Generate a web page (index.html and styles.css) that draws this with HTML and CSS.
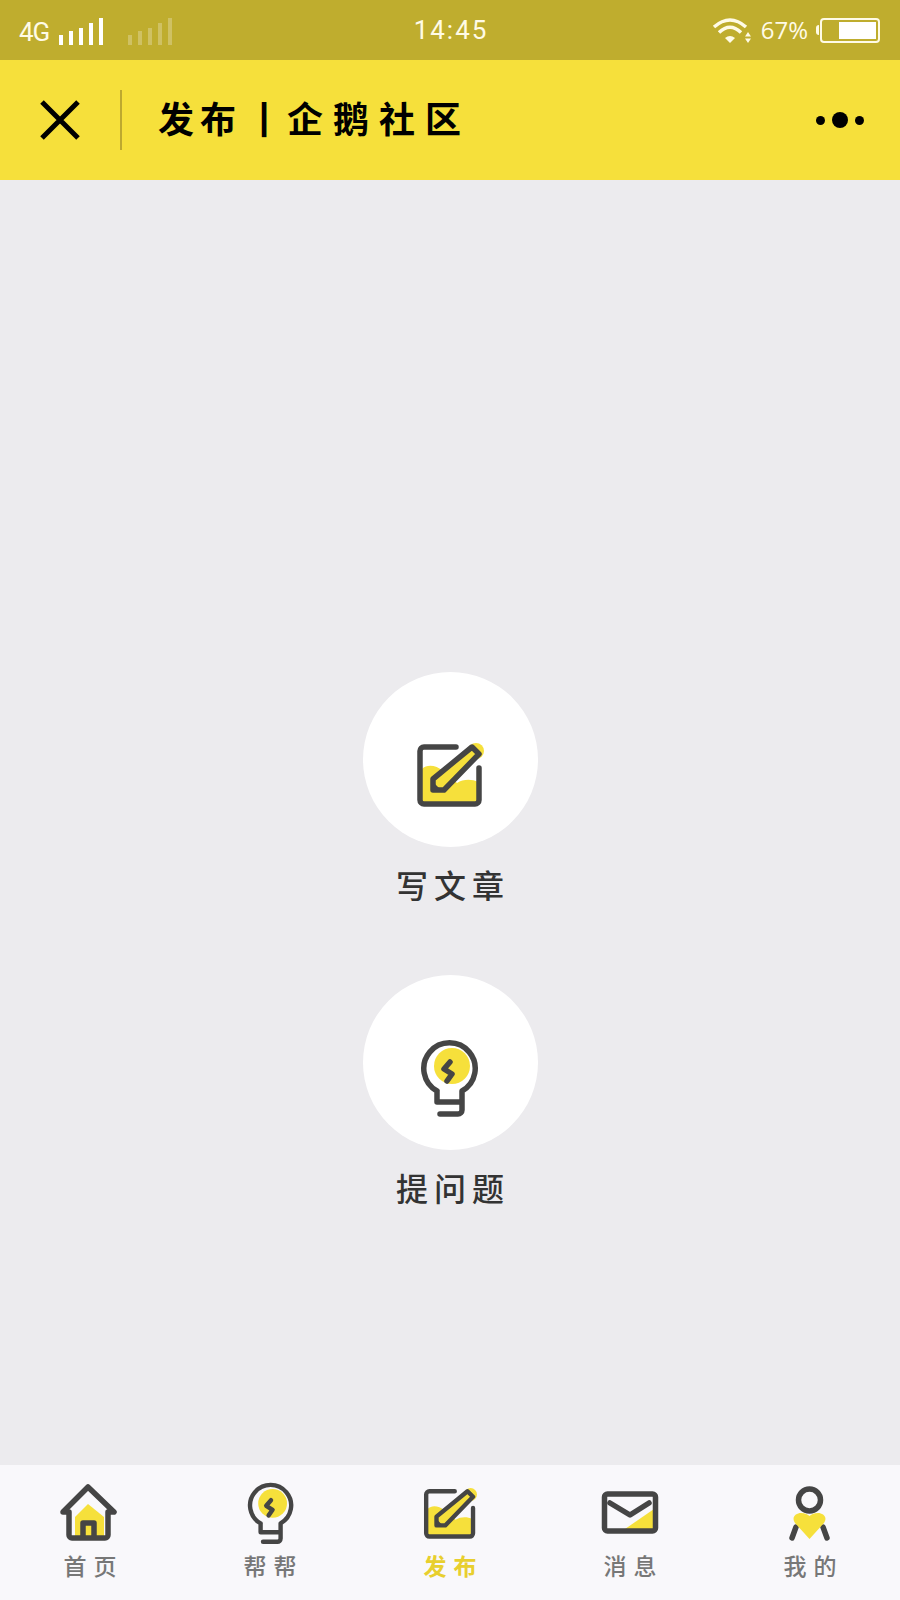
FILE: index.html
```html
<!DOCTYPE html>
<html lang="zh-CN">
<head>
  <meta charset="UTF-8">
  <title>发布 | 企鹅社区</title>
  <link rel="stylesheet" href="styles.css">
</head>
<body>
  <svg class="defs" width="0" height="0">
    <symbol id="icon-edit" viewBox="0 0 68 64">
      <path class="fill-y" d="M6 59V26C11 21 20 22 27 28L41 40C47 36 56 36 62 39V59Z"/>
      <circle class="fill-y" cx="60" cy="8" r="8"/>
      <path class="line" d="M40 4H8a4 4 0 0 0-4 4V57a4 4 0 0 0 4 4H59a4 4 0 0 0 4-4V25"/>
      <path class="pencil" d="M56 4L63 11L28 47H17V36Z"/>
      <path class="fill-d" d="M17 39L25 47H17Z"/>
    </symbol>
    <symbol id="icon-bulb" viewBox="0 0 60 80">
      <circle class="fill-y" cx="32" cy="28" r="18"/>
      <path class="line" d="M17 53A25.7 25.7 0 1 1 42 53V72a4 4 0 0 1-4 4H20M17 53V64H42"/>
      <path class="line" d="M30 24L24 31L32 36L27 43"/>
    </symbol>
    <symbol id="icon-home" viewBox="0 0 60 60">
      <path class="fill-y" d="M15 34L28 21L44 34V54H15Z"/>
      <path class="line" d="M9 29H3L28 4L54 29H48M9 29V52a3 3 0 0 0 3 3H45a3 3 0 0 0 3-3V29M23 55V40H34V55"/>
    </symbol>
    <symbol id="icon-mail" viewBox="0 0 60 50">
      <path class="fill-y" d="M54 21L25 41H54Z"/>
      <rect class="line" x="4.5" y="6" width="51" height="37" rx="3"/>
      <path class="line" d="M10 15L30 27L49 15"/>
    </symbol>
    <symbol id="icon-user" viewBox="0 0 50 60">
      <circle class="line" cx="24.500" cy="17" r="11"/>
      <path class="line" d="M11 44L7 55M38 44L42 55"/>
      <path class="fill-y" d="M24.500 56L10 40C6 34 11 30 16 30C20 30 23 31.500 24.500 33C26 31.500 29 30 33 30C38 30 43 34 39 40Z"/>
    </symbol>
  </svg>

  <div class="status-bar">
    <div class="status-left">
      <span class="net">4G</span>
      <span class="signal"><i></i><i></i><i></i><i></i><i></i></span>
      <span class="signal off"><i></i><i></i><i></i><i></i><i></i></span>
    </div>
    <div class="status-time">14:45</div>
    <div class="status-right">
      <svg class="wifi" width="40" height="28" viewBox="0 0 40 28">
        <path class="wifi-arc" d="M2 11Q18 -3 34 11M7 16.500Q18 6 29 16.500"/>
        <path class="wifi-dot" d="M13 22Q18 18 23 22L18 27Z"/>
        <path class="wifi-dot" d="M36 16L39 20.500H33ZM33 22.500H39L36 27Z"/>
      </svg>
      <span class="percent">67%</span>
      <span class="battery-nub"></span>
      <span class="battery"><span class="battery-level"></span></span>
    </div>
  </div>

  <header class="top-bar">
    <button class="close" aria-label="关闭">
      <svg width="40" height="40" viewBox="0 0 40 40"><path class="close-x" d="M2 2L38 38M38 2L2 38"/></svg>
    </button>
    <div class="top-divider"></div>
    <h1 class="top-title"><span>发布</span><span class="sep">|</span><span class="wide">企鹅社区</span></h1>
    <div class="more"><i></i><i class="big"></i><i></i></div>
  </header>

  <main class="content">
    <a class="action">
      <span class="action-circle"><svg class="action-icon" width="68" height="64"><use href="#icon-edit"/></svg></span>
      <span class="action-label">写文章</span>
    </a>
    <a class="action">
      <span class="action-circle"><svg class="action-icon" width="60" height="80"><use href="#icon-bulb"/></svg></span>
      <span class="action-label">提问题</span>
    </a>
  </main>

  <nav class="tab-bar">
    <a class="tab">
      <span class="tab-icon"><svg width="60" height="60"><use href="#icon-home"/></svg></span>
      <span class="tab-label">首页</span>
    </a>
    <a class="tab">
      <span class="tab-icon bulb"><svg width="48" height="64"><use href="#icon-bulb"/></svg></span>
      <span class="tab-label">帮帮</span>
    </a>
    <a class="tab active">
      <span class="tab-icon"><svg width="54" height="51"><use href="#icon-edit"/></svg></span>
      <span class="tab-label">发布</span>
    </a>
    <a class="tab">
      <span class="tab-icon"><svg width="60" height="50"><use href="#icon-mail"/></svg></span>
      <span class="tab-label">消息</span>
    </a>
    <a class="tab">
      <span class="tab-icon"><svg width="50" height="60"><use href="#icon-user"/></svg></span>
      <span class="tab-label">我的</span>
    </a>
  </nav>
</body>
</html>
```

FILE: styles.css
```css
:root {
  --yellow: #f6e03b;
  --olive: #bfad2e;
  --bg: #ecebee;
  --ink: #454545;
  --cream: #fffbe6;
}

* {
  box-sizing: border-box;
}

body {
  margin: 0;
  width: 900px;
  height: 1600px;
  display: flex;
  flex-direction: column;
  background-color: var(--bg);
  font-family: "Noto Sans CJK SC", "Noto Sans", sans-serif;
}

.defs {
  position: absolute;
}

.fill-y {
  fill: var(--yellow);
}

.fill-d {
  fill: var(--ink);
}

.line {
  fill: none;
  stroke: var(--ink);
  stroke-width: 5.5;
  stroke-linecap: round;
  stroke-linejoin: round;
}

.pencil {
  fill: var(--yellow);
  stroke: var(--ink);
  stroke-width: 5.5;
  stroke-linejoin: round;
}

/* status bar */
.status-bar {
  height: 60px;
  flex: none;
  display: flex;
  align-items: center;
  background-color: var(--olive);
  color: var(--cream);
}

.status-left,
.status-right {
  flex: 1;
  display: flex;
}

.status-left {
  align-items: flex-end;
  height: 27px;
  margin-top: 3px;
  padding-left: 19px;
}

.net {
  font-family: "Roboto", sans-serif;
  font-size: 26px;
  line-height: 25px;
  letter-spacing: -1px;
  margin-right: 10px;
}

.signal {
  display: flex;
  align-items: flex-end;
  gap: 6px;
  margin-right: 25px;
}

.signal i {
  display: block;
  width: 4px;
  background-color: #fff;
}

.signal i:nth-child(1) { height: 10px; }
.signal i:nth-child(2) { height: 14px; }
.signal i:nth-child(3) { height: 17px; }
.signal i:nth-child(4) { height: 22px; }
.signal i:nth-child(5) { height: 27px; }

.signal.off {
  opacity: 0.25;
}

.status-time {
  font-family: "Roboto", sans-serif;
  font-size: 26px;
  letter-spacing: 2px;
  margin-left: 3px;
}

.status-right {
  justify-content: flex-end;
  align-items: center;
  padding-right: 20px;
}

.wifi {
  margin-right: 9px;
}

.wifi-arc {
  fill: none;
  stroke: var(--cream);
  stroke-width: 3.5;
}

.wifi-dot {
  fill: var(--cream);
}

.percent {
  font-family: "Open Sans", sans-serif;
  font-size: 24px;
  line-height: 28px;
  margin-right: 8px;
}

.battery-nub {
  width: 3px;
  height: 10px;
  border-radius: 3px 0 0 3px;
  background-color: var(--cream);
  margin-right: 1px;
}

.battery {
  width: 60px;
  height: 25px;
  display: flex;
  justify-content: flex-end;
  padding: 2px;
  border: 2px solid var(--cream);
  border-radius: 4px;
}

.battery-level {
  width: 37px;
  background-color: #fff;
}

/* top bar */
.top-bar {
  height: 120px;
  flex: none;
  display: flex;
  align-items: center;
  background-color: var(--yellow);
}

.close {
  width: 120px;
  height: 60px;
  padding: 0;
  border: none;
  background: none;
  display: flex;
  align-items: center;
  justify-content: center;
}

.close-x {
  fill: none;
  stroke: #000;
  stroke-width: 5;
}

.top-divider {
  width: 2px;
  height: 60px;
  background-color: #bda92f;
}

.top-title {
  flex: 1;
  margin: 0 0 6px 36px;
  display: flex;
  align-items: center;
  color: #000;
  font-size: 36px;
  font-weight: 700;
  letter-spacing: 6px;
}

.top-title .sep {
  font-family: "Liberation Sans", sans-serif;
  margin: 0 18px 0 17px;
  letter-spacing: 0;
}

.top-title .wide {
  letter-spacing: 10px;
}

.more {
  display: flex;
  align-items: center;
  gap: 7px;
  margin-right: 36px;
}

.more i {
  display: block;
  width: 9px;
  height: 9px;
  border-radius: 50%;
  background-color: #000;
}

.more i.big {
  width: 16px;
  height: 16px;
}

/* publish actions */
.content {
  flex: 1;
  display: flex;
  flex-direction: column;
  align-items: center;
  gap: 67px;
  padding-top: 492px;
}

.action {
  display: flex;
  flex-direction: column;
  align-items: center;
  gap: 13px;
}

.action-circle {
  width: 175px;
  height: 175px;
  border-radius: 50%;
  background-color: #fff;
  display: flex;
  align-items: center;
  justify-content: center;
}

.action-icon {
  margin-top: 30px;
}

.action-label {
  color: #333;
  font-size: 32px;
  font-weight: 500;
  line-height: 48px;
  letter-spacing: 6px;
  margin-right: -6px;
}

/* tabs */
.tab-bar {
  height: 135px;
  flex: none;
  display: grid;
  grid-template-columns: repeat(5, 1fr);
  background-color: #f9f8fb;
  padding-top: 16px;
}

.tab {
  display: flex;
  flex-direction: column;
  align-items: center;
}

.tab-icon {
  height: 64px;
  display: flex;
  align-items: center;
  justify-content: center;
}

.tab-icon.bulb {
  margin-left: 2px;
}

.tab-label {
  color: #777;
  font-size: 23px;
  font-weight: 500;
  line-height: 32px;
  letter-spacing: 7px;
  margin-right: -7px;
  margin-top: 4px;
}

.tab.active .tab-label {
  color: #e8cf2e;
  font-weight: 700;
}
```
